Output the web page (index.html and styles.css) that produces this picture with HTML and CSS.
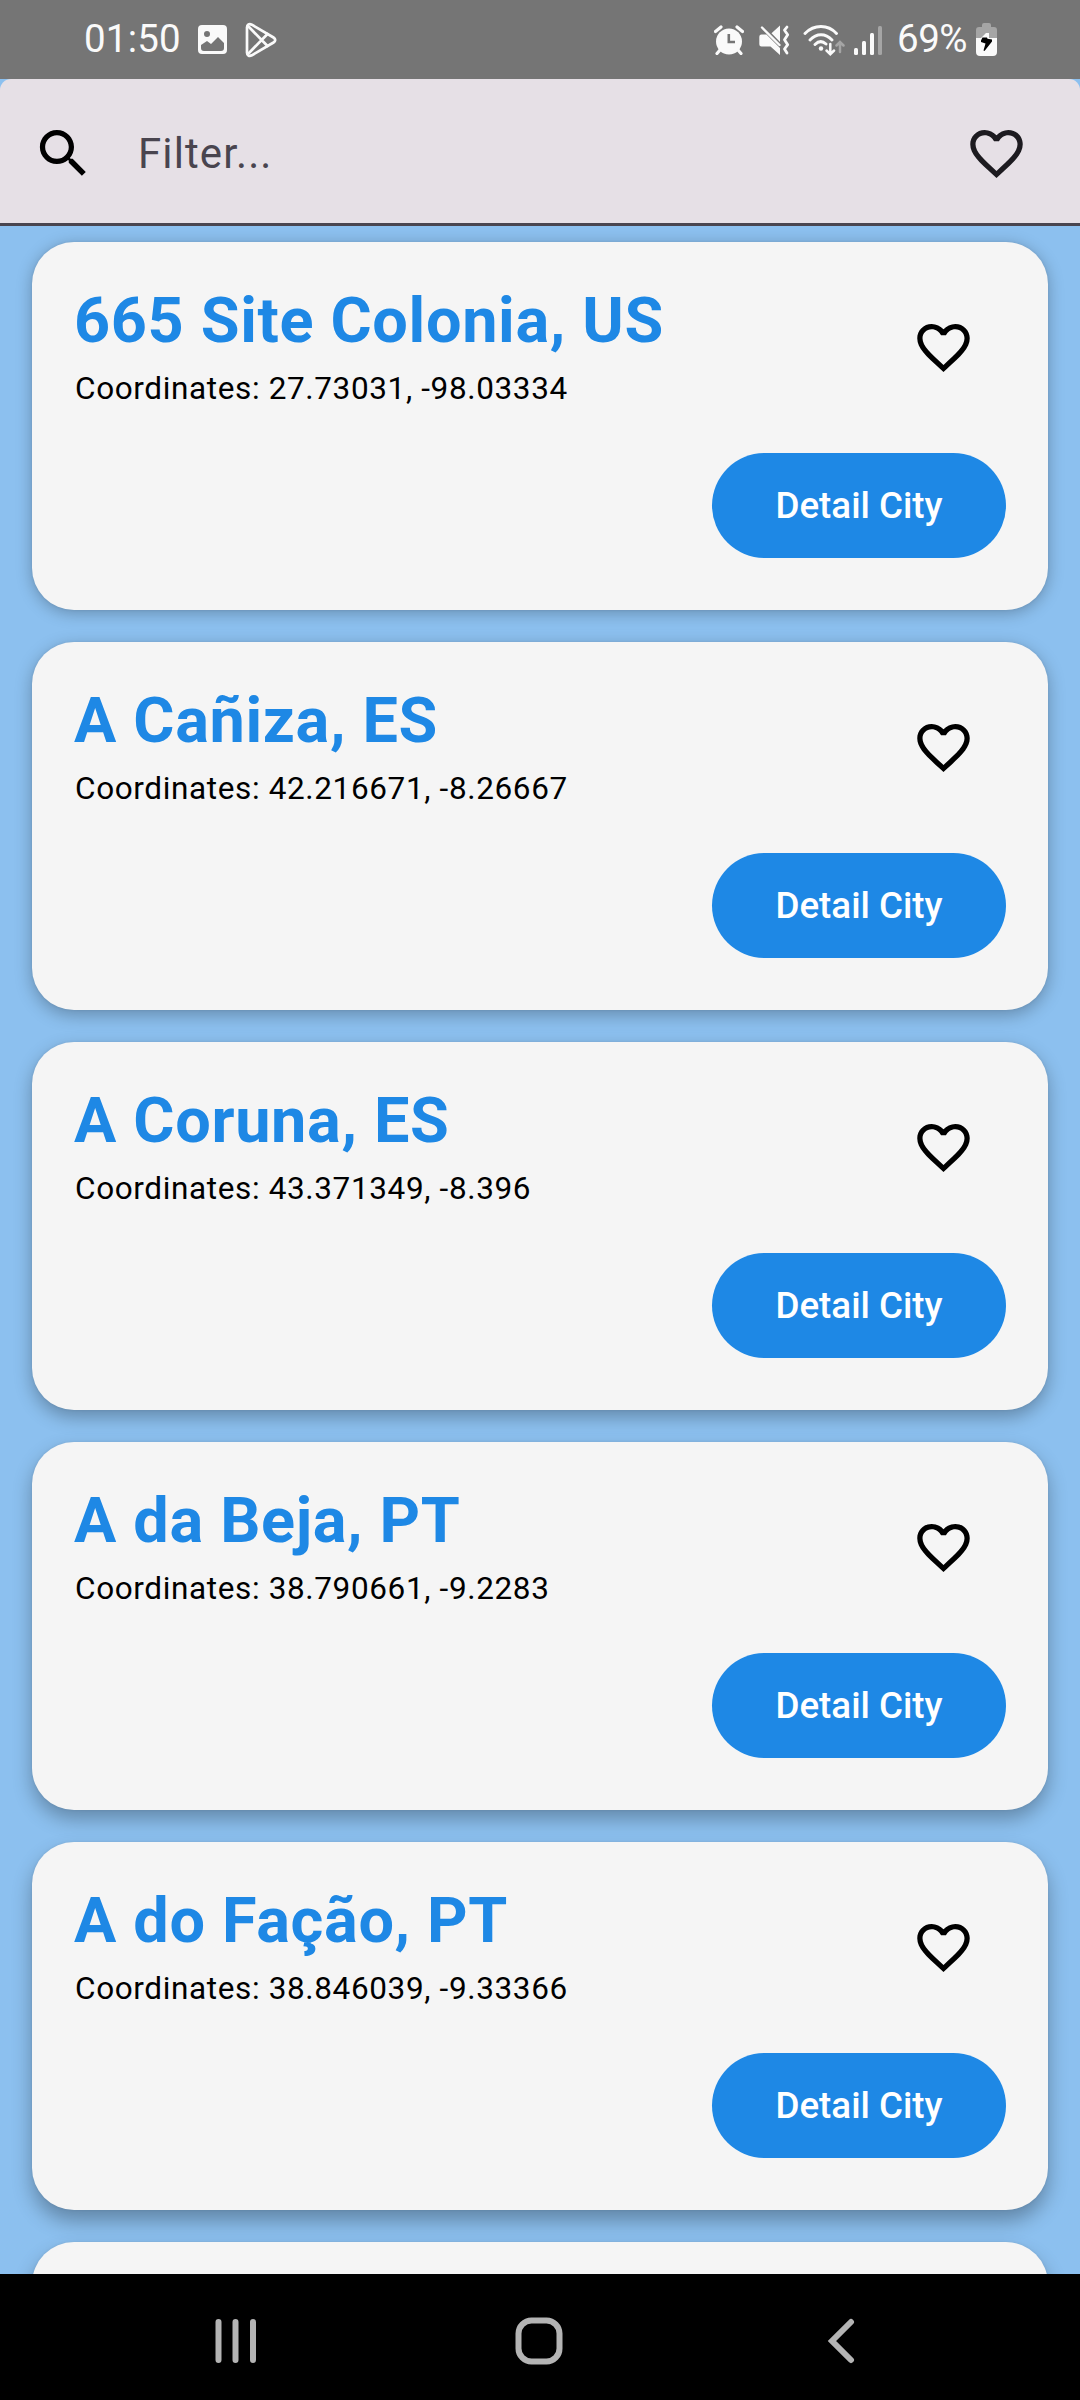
FILE: index.html
```html
<!DOCTYPE html>
<html lang="en">
<head>
<meta charset="utf-8">
<title>Cities</title>
<link rel="stylesheet" href="styles.css">
</head>
<body>
<svg class="defs" width="0" height="0" aria-hidden="true">
  <symbol id="heart" viewBox="0 0 24 24"><path d="M16.5 3c-1.74 0-3.41.81-4.5 2.09C10.91 3.81 9.24 3 7.5 3 4.42 3 2 5.42 2 8.5c0 3.78 3.4 6.86 8.55 11.54L12 21.35l1.45-1.32C18.6 15.36 22 12.28 22 8.5 22 5.42 19.58 3 16.5 3zm-4.4 15.55l-.1.1-.1-.1C7.14 14.24 4 11.39 4 8.5 4 6.5 5.5 5 7.5 5c1.54 0 3.04.99 3.57 2.36h1.87C13.46 5.99 14.96 5 16.5 5c2 0 3.5 1.5 3.5 3.5 0 2.89-3.14 5.74-7.9 10.05z"/></symbol>
</svg>
<div class="screen">
  <header class="status">
    <div class="status-left">
      <span class="clock">01:50</span>
      <svg class="picture" width="29" height="29" viewBox="0 0 29 29"><path fill-rule="evenodd" d="M4 0h21a4 4 0 0 1 4 4v21a4 4 0 0 1-4 4H4a4 4 0 0 1-4-4V4a4 4 0 0 1 4-4zM9 6a3 3 0 1 0 0 6 3 3 0 0 0 0-6zM3 20v3a3 3 0 0 0 3 3h17a3 3 0 0 0 3-3v-5l-6-6-7 7-4-3z"/></svg>
      <svg class="play" width="32" height="36" viewBox="0 0 32 36"><g fill="none" stroke="#fafafa" stroke-width="2.7" stroke-linejoin="round" stroke-linecap="round"><path d="M2 5.5C2 2.5 4.2 1.3 6.8 2.7L28.5 15.5C30.8 17 30.8 19 28.5 20.500L6.8 33.3C4.2 34.7 2 33.5 2 30.500z"/><path d="M3.5 4.5L22.500 24M3.5 31.5L22.500 12"/></g></svg>
    </div>
    <div class="status-right">
      <svg width="30" height="30" viewBox="0 0 30 30"><circle cx="15" cy="16.5" r="13"/><path d="M1.5 6.5L7 2M28.5 6.5L23 2M6 25l-3 3.5M24 25l3 3.5" fill="none" stroke="#fafafa" stroke-width="3.2" stroke-linecap="round"/><path d="M14.8 9v8H21" fill="none" stroke="#757575" stroke-width="2.6"/></svg>
      <svg class="mute" width="31" height="30" viewBox="0 0 31 30"><path d="M2.500 9.500h5L21 23v7l-9.500-8.500h-9A2.200 2.200 0 0 1 .3 19.300v-7.600a2.200 2.200 0 0 1 2.200-2.200zM21 .5v16.500L12.500 8.300z"/><path d="M3 2.5L20.500 20" fill="none" stroke="#fafafa" stroke-width="2.4" stroke-linecap="round"/><path d="M28 2l-2.500 3.200 3.200 4.500-3.200 5 3.200 5-3.200 4.300L28 28" fill="none" stroke="#fafafa" stroke-width="2.8" stroke-linecap="round" stroke-linejoin="round"/></svg>
      <svg class="wifi" width="42" height="32" viewBox="0 0 42 32"><g fill="none" stroke="#fafafa" stroke-width="2.9" stroke-linecap="round"><path d="M2 9.5C11 .2 25 .2 33.500 9.500M7 16C13.500 9 22.500 9 29 16M12 20.500C15.800 16.700 19.500 16.800 23 20"/><path stroke-width="2.5" d="M27.300 20v9.500M23.500 26.500l3.800 3.700 3.800-3.700"/><path stroke="#a5a5a5" stroke-width="2.5" d="M37 28V18.500M33.500 21.500l3.500-3.500 3.500 3.500"/></g><circle cx="18" cy="24.500" r="2.200"/></svg>
      <svg class="signal" width="28" height="30" viewBox="0 0 28 30"><rect y="23" width="4" height="7" rx="1.5"/><rect x="8" y="16" width="4" height="14" rx="1.5"/><rect x="16" y="8" width="4" height="22" rx="1.5"/><rect x="24" y="1" width="4" height="29" rx="1.5" fill="#a5a5a5"/></svg>
      <span class="percent">69%</span>
      <svg class="battery" width="21" height="33" viewBox="0 0 21 33"><path fill="#a5a5a5" d="M6 4V2a2 2 0 0 1 2-2h5a2 2 0 0 1 2 2v2h3a3 3 0 0 1 3 3v9H0V7a3 3 0 0 1 3-3z"/><path d="M0 15h5l5-5h3v5h8v14a4 4 0 0 1-4 4H4a4 4 0 0 1-4-4z"/><path fill="#000" d="M6.500 14.500h4.500l.5 1.200 4.500.8v2l-7.500 9.500-1-.5 2-7-4.500-1.500v-1.500z"/></svg>
    </div>
  </header>
  <div class="filter">
    <svg class="search icon" viewBox="0 0 24 24"><path d="M15.5 14h-.79l-.28-.27C15.410 12.590 16 11.110 16 9.500 16 5.910 13.090 3 9.500 3S3 5.910 3 9.500 5.910 16 9.500 16c1.610 0 3.090-.59 4.230-1.570l.27.28v.79l5 4.990L20.490 19l-4.990-5zm-6 0C7.010 14 5 11.990 5 9.500S7.010 5 9.500 5 14 7.010 14 9.500 11.990 14 9.500 14z"/></svg>
    <span class="placeholder">Filter...</span>
    <svg class="icon favorites"><use href="#heart"/></svg>
  </div>
  <main class="list">
    <article class="card s1"><div class="info"><div><h2>665 Site Colonia, US</h2><p>Coordinates: 27.73031, -98.03334</p></div><svg class="icon"><use href="#heart"/></svg></div><button>Detail City</button></article>
    <article class="card s2"><div class="info"><div><h2>A Cañiza, ES</h2><p>Coordinates: 42.216671, -8.26667</p></div><svg class="icon"><use href="#heart"/></svg></div><button>Detail City</button></article>
    <article class="card s3"><div class="info"><div><h2>A Coruna, ES</h2><p>Coordinates: 43.371349, -8.396</p></div><svg class="icon"><use href="#heart"/></svg></div><button>Detail City</button></article>
    <article class="card s4"><div class="info"><div><h2>A da Beja, PT</h2><p>Coordinates: 38.790661, -9.2283</p></div><svg class="icon"><use href="#heart"/></svg></div><button>Detail City</button></article>
    <article class="card s5"><div class="info"><div><h2>A do Fação, PT</h2><p>Coordinates: 38.846039, -9.33366</p></div><svg class="icon"><use href="#heart"/></svg></div><button>Detail City</button></article>
    <article class="card s5"></article>
  </main>
  <nav class="nav">
    <svg class="recents" width="42" height="46" viewBox="0 0 42 46"><path d="M3.5 4v38M20.500 4v38M38 4v38"/></svg>
    <svg class="home" width="48" height="48" viewBox="0 0 48 48"><rect x="3.5" y="3.5" width="41" height="41" rx="13"/></svg>
    <svg class="back" width="28" height="46" viewBox="0 0 28 46"><path d="M24 4L5 23l19 19"/></svg>
  </nav>
</div>
</body>
</html>
```
FILE: styles.css
```css
* { box-sizing: border-box; }
body { margin: 0; font-family: Roboto, "Liberation Sans", sans-serif; }
.defs { display: none; }
.screen { width: 1080px; height: 2400px; display: flex; flex-direction: column; overflow: hidden; background: #8cc0ef; }
.status { height: 79px; flex: none; padding: 0 83px 0 84px; display: flex; justify-content: space-between; align-items: center; background: #757575; color: #fafafa; fill: #fafafa; font-size: 38.5px; line-height: 77px; }
.status-left, .status-right { display: flex; align-items: center; height: 79px; }
.clock, .percent { height: 79px; }
.clock { letter-spacing: .2px; }
.picture { margin-left: 17px; }
.play { margin-left: 18px; }
.mute { margin-left: 15px; }
.wifi { margin-left: 13px; }
.signal { margin-left: 9px; }
.percent { margin-left: 15px; letter-spacing: -.5px; }
.battery { margin-left: 9px; }
.icon { width: 63px; height: 63px; flex: none; fill: #000; }
.filter { height: 147px; flex: none; display: flex; align-items: center; padding: 4px 52px 0 32px; background: #e6e0e6; border-bottom: 3px solid #49454f; border-radius: 11px 11px 0 0; }
.placeholder { flex: 1; margin-left: 43px; font-size: 42px; letter-spacing: 1.1px; color: #49454f; }
.favorites { fill: #1d1b20; }
.list { flex: 1; min-height: 0; overflow: hidden; padding: 16px 32px 0; }
.card { height: 368px; margin-bottom: 32px; padding: 42px; border-radius: 42px; background: #f5f5f5; display: flex; flex-direction: column; align-items: flex-end; }
.s1 { box-shadow: 0 3px 16px rgba(0, 0, 0, .27), 0 0 3px rgba(0, 0, 0, .08); }
.s2 { box-shadow: 0 5px 17px rgba(0, 0, 0, .28), 0 0 3px rgba(0, 0, 0, .08); }
.s3 { box-shadow: 0 7px 18px rgba(0, 0, 0, .29), 0 0 3px rgba(0, 0, 0, .08); }
.s4 { box-shadow: 0 9px 19px rgba(0, 0, 0, .29), 0 0 3px rgba(0, 0, 0, .08); }
.s5 { box-shadow: 0 11px 20px rgba(0, 0, 0, .3), 0 0 3px rgba(0, 0, 0, .08); }
.info { width: 100%; height: 127px; margin-bottom: 42px; padding-right: 31px; display: flex; justify-content: space-between; align-items: center; }
.info > div { align-self: flex-start; }
h2 { margin: -5px 0 0; font-size: 63px; line-height: 84px; font-weight: 700; letter-spacing: .66px; color: #1e88e5; }
p { margin: 5px 0 0 1px; font-size: 31.5px; line-height: 42px; letter-spacing: .63px; color: #000; }
button { width: 294px; height: 105px; border: 0; border-radius: 53px; padding: 0; background: #1e88e5; color: #fff; font: 500 36.75px/52px Roboto, sans-serif; letter-spacing: 0; }
.nav { height: 126px; flex: none; background: #000; display: flex; align-items: center; padding: 8px 0 0 215px; fill: none; stroke: #b4b4b4; stroke-width: 6px; stroke-linecap: round; }
.home { margin-left: 258px; }
.back { margin-left: 264px; }
```
